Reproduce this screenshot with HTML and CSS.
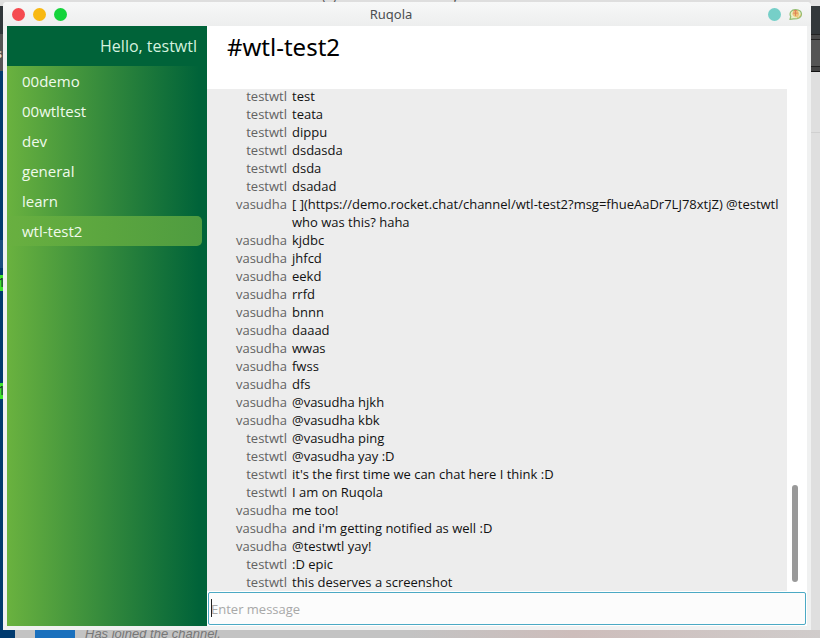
FILE: index.html
```
<!DOCTYPE html>
<html lang="en">
<head>
<meta charset="utf-8">
<title>Ruqola</title>
<link rel="stylesheet" href="styles.css">
</head>
<body>
<div class="desktop" aria-hidden="true">
  <div class="edge edge-left"><i class="mark mark-a">1</i><i class="mark mark-b">1</i><b class="glyph">s</b></div>
  <div class="edge edge-right"></div>
  <div class="top-text"><span>(</span><span>)</span><span>y</span></div>
  <div class="page-below"><span class="avatar"></span><em>Has joined the channel.</em></div>
</div>
<div class="window">
  <header class="titlebar">
    <div class="controls">
      <button class="dot red" aria-label="Close"></button>
      <button class="dot amber" aria-label="Minimize"></button>
      <button class="dot green" aria-label="Maximize"></button>
    </div>
    <span class="title">Ruqola</span>
    <div class="controls right">
      <button class="dot teal" aria-label="Pin"></button>
      <svg class="app-icon" viewBox="0 0 14 14" aria-hidden="true">
        <path d="M1 12.3 1.9 9.3C-.2 5.5 2.500 1.700 7 1.700S13.400 4 13.400 6.800 10.500 12 5 11.800Z" fill="#e9efc9" stroke="#93bd72" stroke-width="1.300" stroke-linejoin="round"/>
        <path d="M3.500 6.500 4.500 3.200 7 2.500l2.800.7 1.400 3.200-1.400 3-2.600.6-2.500-1.300Z" fill="#eec477"/>
        <path d="M5 2.800h4M7 2.500v6M4.500 5.500h5" stroke="#dc8058" fill="none"/>
        <path d="M12.800 7a5.400 5.400 0 0 1-4.500 3.800" stroke="#e0b95d" fill="none"/>
      </svg>
    </div>
  </header>
  <div class="app">
    <aside class="sidebar">
      <div class="greeting">Hello, testwtl</div>
      <nav class="rooms">
        <a href="#">00demo</a>
        <a href="#">00wtltest</a>
        <a href="#">dev</a>
        <a href="#">general</a>
        <a href="#">learn</a>
        <a href="#" class="active" aria-current="page">wtl-test2</a>
      </nav>
    </aside>
    <main class="chat">
      <h1>#wtl-test2</h1>
      <div class="history">
        <div class="messages">
          <div class="msg"><span class="who">testwtl</span><span>test</span></div>
          <div class="msg"><span class="who">testwtl</span><span>teata</span></div>
          <div class="msg"><span class="who">testwtl</span><span>dippu</span></div>
          <div class="msg"><span class="who">testwtl</span><span>dsdasda</span></div>
          <div class="msg"><span class="who">testwtl</span><span>dsda</span></div>
          <div class="msg"><span class="who">testwtl</span><span>dsadad</span></div>
          <div class="msg"><span class="who">vasudha</span><span>[ ](https://demo.rocket.chat/channel/wtl-test2?msg=fhueAaDr7LJ78xtjZ) @testwtl who was this? haha</span></div>
          <div class="msg"><span class="who">vasudha</span><span>kjdbc</span></div>
          <div class="msg"><span class="who">vasudha</span><span>jhfcd</span></div>
          <div class="msg"><span class="who">vasudha</span><span>eekd</span></div>
          <div class="msg"><span class="who">vasudha</span><span>rrfd</span></div>
          <div class="msg"><span class="who">vasudha</span><span>bnnn</span></div>
          <div class="msg"><span class="who">vasudha</span><span>daaad</span></div>
          <div class="msg"><span class="who">vasudha</span><span>wwas</span></div>
          <div class="msg"><span class="who">vasudha</span><span>fwss</span></div>
          <div class="msg"><span class="who">vasudha</span><span>dfs</span></div>
          <div class="msg"><span class="who">vasudha</span><span>@vasudha hjkh</span></div>
          <div class="msg"><span class="who">vasudha</span><span>@vasudha kbk</span></div>
          <div class="msg"><span class="who">testwtl</span><span>@vasudha ping</span></div>
          <div class="msg"><span class="who">testwtl</span><span>@vasudha yay :D</span></div>
          <div class="msg"><span class="who">testwtl</span><span>it's the first time we can chat here I think :D</span></div>
          <div class="msg"><span class="who">testwtl</span><span>I am on Ruqola</span></div>
          <div class="msg"><span class="who">vasudha</span><span>me too!</span></div>
          <div class="msg"><span class="who">vasudha</span><span>and i'm getting notified as well :D</span></div>
          <div class="msg"><span class="who">vasudha</span><span>@testwtl yay!</span></div>
          <div class="msg"><span class="who">testwtl</span><span>:D epic</span></div>
          <div class="msg"><span class="who">testwtl</span><span>this deserves a screenshot</span></div>
        </div>
        <div class="scrollbar"><div class="thumb"></div></div>
      </div>
      <div class="composer">
        <input type="text" placeholder="Enter message" aria-label="Message">
        <span class="caret"></span>
      </div>
    </main>
  </div>
</div>
</body>
</html>
```
FILE: styles.css
```
* { box-sizing: border-box; }

body {
  margin: 0;
  height: 100vh;
  overflow: hidden;
  display: flex;
  padding: 2px 9px 8px 3px;
  background: #dedede;
  font-family: "Open Sans", "Noto Sans", sans-serif;
  font-size: 13px;
  line-height: 18px;
  color: #111;
}

/* Other windows visible behind the application window */
.desktop {
  position: absolute;
  inset: 0;
  overflow: hidden;
}

.edge { position: absolute; top: 0; bottom: 0; }

.edge-left {
  left: 0;
  width: 3px;
  overflow: hidden;
  background: linear-gradient(#dedede 6px, #30363a 6px 34px, #555 34px 71px, #003a6e 71px 240px, #1a4d80 240px 268px, #003a6e 268px);
}

.edge-right {
  right: 0;
  width: 9px;
  background: linear-gradient(#e4e4e4 6px, #33383b 6px 34px, #222 34px 35px, #4a4a4a 35px 39px, #222 39px 40px, #555 40px 66px, #222 66px 67px, #444 67px 71px, #111 71px 72px, #dfdfdf 72px 132px, #d0d0d0 132px 133px, #dfdfdf 133px);
}

.mark {
  position: absolute;
  left: 0;
  width: 3px;
  height: 16px;
  background: #3ee42e;
  color: #123;
  font-style: normal;
  line-height: 14px;
  text-indent: -2px;
}

.mark-a { top: 275px; }
.mark-b { top: 383px; }

.glyph {
  position: absolute;
  top: 44px;
  right: 1px;
  color: #ddd;
}

.top-text {
  position: absolute;
  top: -12px;
  left: 322px;
  display: flex;
  gap: 7px;
  line-height: 16px;
  color: #555;
}

.top-text span:last-child { margin-left: 108px; }

.page-below {
  position: absolute;
  left: 0;
  right: 0;
  bottom: 0;
  height: 8px;
  display: flex;
  align-items: center;
  gap: 10px;
  padding-left: 35px;
  background: linear-gradient(90deg, #003a6e 15px, #c3c3c3 15px 50%, #cdbdbb 70%, #d0cccb);
  font-family: "Liberation Sans", sans-serif;
  line-height: 10px;
  color: #777;
}

.avatar { width: 40px; height: 8px; background: #1a70bd; }

.window {
  position: relative;
  flex: 1;
  min-width: 0;
  display: flex;
  flex-direction: column;
  padding: 0 4px 4px;
  border-radius: 4px 4px 0 0;
  background: #f0f1f1;
}

.titlebar {
  flex: none;
  height: 24px;
  display: grid;
  grid-template-columns: 1fr auto 1fr;
  align-items: center;
  margin: 0 -4px;
  padding: 0 9px;
  border-radius: 4px 4px 0 0;
  background: linear-gradient(#f7f8f8, #edeeee);
  color: #4c4f51;
}

.title { padding-right: 32px; font-family: "Noto Sans", sans-serif; }

.controls { display: flex; align-items: center; gap: 8px; }
.controls.right { justify-content: flex-end; }

.dot {
  width: 13px;
  height: 13px;
  padding: 0;
  border: 0;
  border-radius: 50%;
}

.red { background: #f54a50; }
.amber { background: #f8b811; }
.green { background: #14d43b; }
.teal { background: #76cfc8; }

.app-icon { width: 13px; height: 13px; }

.app { flex: 1; min-height: 0; display: flex; }

.sidebar {
  flex: none;
  width: 200px;
  display: flex;
  flex-direction: column;
  font-size: 15px;
  line-height: 20px;
  background: linear-gradient(90deg, #6ab23f, #006339 96%);
}

.greeting {
  padding: 10px;
  background: #006339;
  color: #d5f2df;
  font-size: 16px;
  text-align: right;
}

.rooms { display: flex; flex-direction: column; padding-right: 5px; }

.rooms a {
  padding: 5px 15px;
  border-radius: 0 5px 5px 0;
  color: #f0faec;
  text-decoration: none;
}

.rooms .active { background: linear-gradient(90deg, #69b040, #5ba63f 50%, #4f9c40); }

.chat {
  flex: 1;
  min-width: 0;
  display: flex;
  flex-direction: column;
  background: #fff;
}

h1 {
  flex: none;
  height: 63px;
  margin: 0;
  padding: 5px 20px;
  font-family: "Noto Sans", sans-serif;
  font-size: 24px;
  font-weight: 400;
  line-height: 32px;
  color: #000;
}

.history { flex: 1; min-height: 0; display: flex; }

.messages {
  flex: 1;
  min-width: 0;
  display: flex;
  flex-direction: column;
  justify-content: flex-end;
  overflow: hidden;
  background: #ededed;
}

.msg {
  flex: none;
  display: grid;
  grid-template-columns: 80px 1fr;
  gap: 5px;
  padding-right: 5px;
}

.who { color: #626262; text-align: right; }

.scrollbar {
  width: 20px;
  display: flex;
  flex-direction: column;
  justify-content: flex-end;
  padding: 0 9px 9px 5px;
}

.thumb { height: 97px; border-radius: 3px; background: #999; }

.composer { position: relative; flex: none; padding: 1px; }

.composer input {
  display: block;
  width: 100%;
  height: 33px;
  padding: 0 2px;
  border: 1px solid #4ba9c4;
  border-radius: 2px;
  background: #fcfcfc;
  font: inherit;
  color: #111;
}

.composer input::placeholder { color: #a8a8a8; opacity: 1; }

.caret {
  position: absolute;
  left: 4px;
  top: 8px;
  width: 1px;
  height: 18px;
  background: #222;
}
```
